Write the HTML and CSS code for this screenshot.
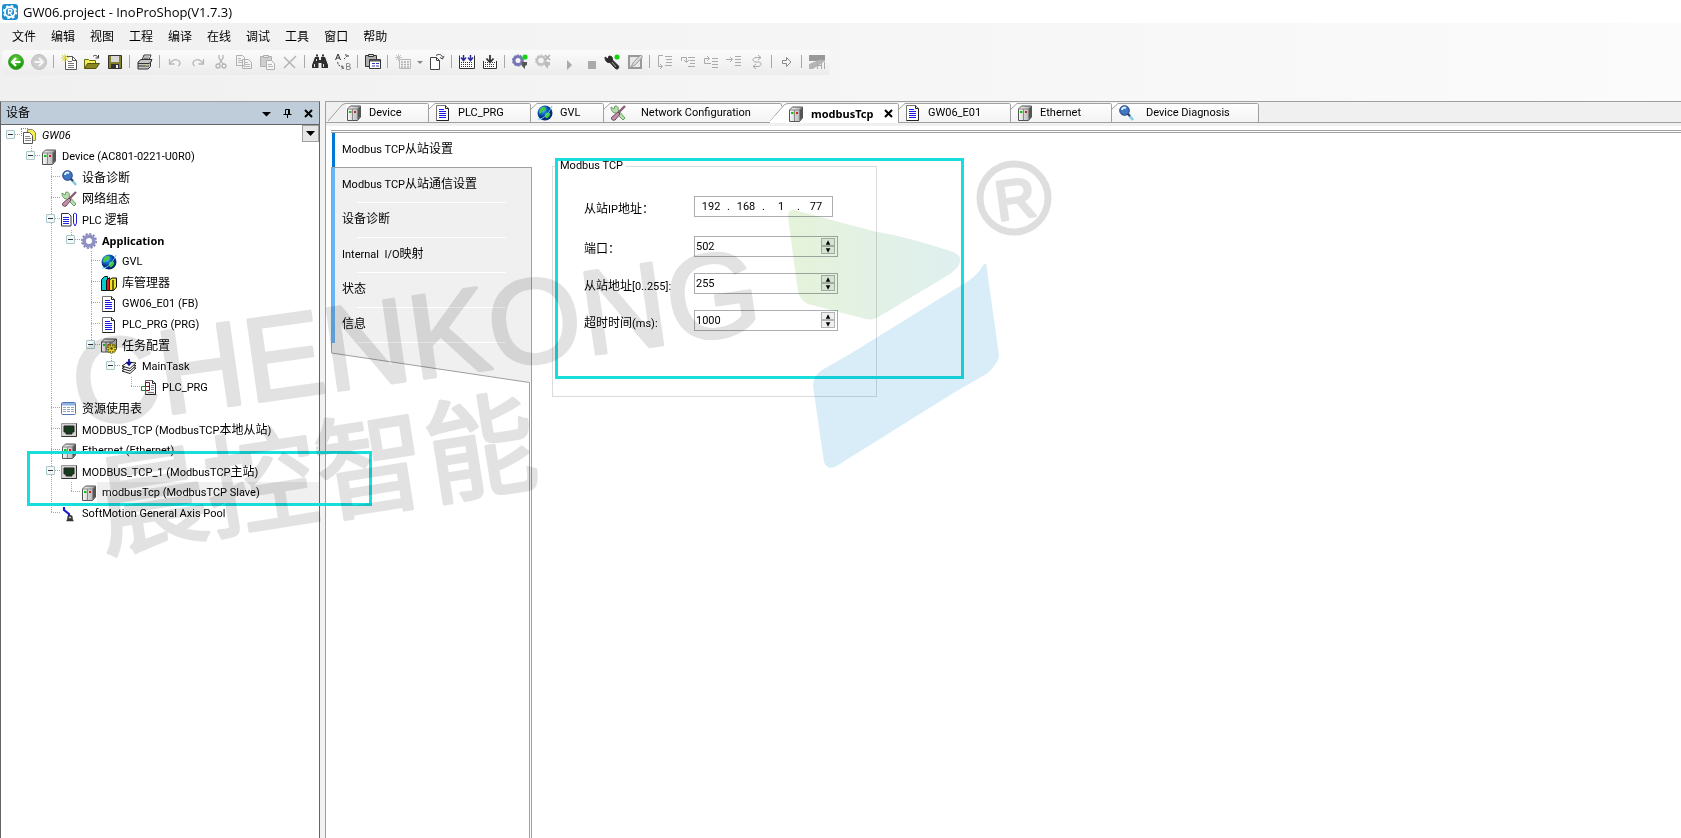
FILE: index.html
```html
<!DOCTYPE html>
<html lang="zh-CN">
<head>
  <meta charset="UTF-8" />
  <meta name="viewport" content="width=device-width, initial-scale=1.0"/>
  <title>GW06.project - InoProShop(V1.7.3)</title>
  <link rel="stylesheet" href="styles.css">
</head>
<body>

  <!-- icon sprite -->
  <svg class="sprite" width="0" height="0" aria-hidden="true">
    <defs>
      <radialGradient id="gGlobe" cx="35%" cy="30%"><stop offset="0" stop-color="#6fd8ff"/><stop offset="0.5" stop-color="#1470d0"/><stop offset="1" stop-color="#052a78"/></radialGradient>
      <radialGradient id="gGreen" cx="50%" cy="35%"><stop offset="0" stop-color="#6fd84a"/><stop offset="1" stop-color="#1f9a10"/></radialGradient>
      <linearGradient id="gBox" x1="0" x2="1"><stop offset="0" stop-color="#f8f8f8"/><stop offset="1" stop-color="#a8a8a8"/></linearGradient>
    </defs>
    <symbol id="i-app" viewBox="0 0 16 16"><rect width="16" height="16" rx="3" fill="#1b8fd0"/><circle cx="8" cy="8" r="5" fill="none" stroke="#fff" stroke-width="1.800"/><circle cx="8" cy="8" r="6.300" fill="none" stroke="#fff" stroke-width="1.600" stroke-dasharray="2.500 2.450"/><path d="M6.500 10.500v-5h2a1.500 1.500 0 0 1 0 3h-1l3 3.500" fill="none" stroke="#fff" stroke-width="1.300"/></symbol>
    <symbol id="i-back" viewBox="0 0 16 16"><circle cx="8" cy="8" r="7.500" fill="url(#gGreen)" stroke="#4aa83a"/><path d="M12.500 8H5M8 4L4 8l4 4" fill="none" stroke="#fff" stroke-width="2.200"/></symbol>
    <symbol id="i-fwd" viewBox="0 0 16 16"><circle cx="8" cy="8" r="7.500" fill="#cdcdcd" stroke="#c0c0c0"/><path d="M3.500 8H11M8 4l4 4-4 4" fill="none" stroke="#f6f6f6" stroke-width="2.200"/></symbol>
    <symbol id="i-new" viewBox="0 0 16 16"><path d="M4.500 2.500h7l4 4v9h-11z" fill="#fff" stroke="#555"/><path d="M11.500 2.500v4h4" fill="none" stroke="#555"/><path d="M7 7.500h4M7 9.500h6M7 11.500h6M7 13.500h6" stroke="#777"/><path d="M4 0v8M0 4h8M1 1l6 6M7 1L1 7" stroke="#d9d23a"/></symbol>
    <symbol id="i-open" viewBox="0 0 16 16"><path d="M0.500 14.500v-9h4l1 1h6v3" fill="#f3ef5a" stroke="#6b6a10"/><path d="M0.500 14.500l3-5h12l-3.500 5z" fill="#8a8620" stroke="#55530c"/><path d="M9 2.500c2-2 4-1 5 1M14.500 1v3h-3" fill="none" stroke="#333"/></symbol>
    <symbol id="i-save" viewBox="0 0 16 16"><path d="M1.500 1.500h13v13h-13z" fill="#85832a" stroke="#333"/><path d="M4 2h8v6H4z" fill="#d8d8d8"/><path d="M4 10h8v4H4z" fill="#333"/><path d="M9 11h2v3H9z" fill="#eee"/></symbol>
    <symbol id="i-print" viewBox="0 0 16 16"><path d="M5 6l2-5h7l-2 5" fill="#fff" stroke="#333"/><path d="M7 3h5M6.500 4.500h5" stroke="#777"/><path d="M1 8l3-2.500h11l-1.500 3v4L11 15H1z" fill="#c4c4c4" stroke="#333"/><path d="M1 9.500h11l2.500-2M1 12h11" fill="none" stroke="#333"/><path d="M8 11h3" stroke="#d8d020"/></symbol>
    <symbol id="i-undo" viewBox="0 0 16 16"><path d="M2.500 5v5h5M3 9.500c2-4 6-5 9-2.500 2 2 1 4-1 5" fill="none" stroke="#b8b8b8" stroke-width="1.300"/></symbol>
    <symbol id="i-redo" viewBox="0 0 16 16"><path d="M13.500 5v5h-5M13 9.500c-2-4-6-5-9-2.500-2 2-1 4 1 5" fill="none" stroke="#b8b8b8" stroke-width="1.300"/></symbol>
    <symbol id="i-cut" viewBox="0 0 16 16"><path d="M6 1v3l4 6M10 1v3L6 10" fill="none" stroke="#b4b4b4" stroke-width="1.300"/><circle cx="5" cy="12" r="2" fill="none" stroke="#b4b4b4" stroke-width="1.300"/><circle cx="11" cy="12" r="2" fill="none" stroke="#b4b4b4" stroke-width="1.300"/></symbol>
    <symbol id="i-copy" viewBox="0 0 16 16"><path d="M0.500 1.500h6l2 2v8h-8zM6.500 5.500h6l3 3v6h-9z" fill="#f4f4f4" stroke="#b0b0b0"/><path d="M2 4.500h3M2 6.500h4M2 8.500h4M8 8.500h4M8 10.500h6M8 12.500h6" stroke="#b8b8b8"/></symbol>
    <symbol id="i-paste" viewBox="0 0 16 16"><path d="M1.500 2.500h11v10h-11z" fill="#cfcfcf" stroke="#b0b0b0"/><path d="M4.500 1.500h5v2h-5z" fill="#eee" stroke="#aaa"/><path d="M7.500 6.500h5l3 3v6h-8z" fill="#f6f6f6" stroke="#b0b0b0"/><path d="M9 10.500h4M9 12.500h5" stroke="#b8b8b8"/></symbol>
    <symbol id="i-del" viewBox="0 0 16 16"><path d="M2 3l11 11M14 2L2 14" stroke="#b4b4b4" stroke-width="1.500"/></symbol>
    <symbol id="i-find" viewBox="0 0 16 16"><path d="M3 3h4v3h2V3h4l3 8v3H9.500V9h-3v5H0v-3z" fill="#2f2f2f"/><path d="M4 1.500h2M10 1.500h2" stroke="#2f2f2f" stroke-width="2"/><path d="M2.500 10v3M11.500 10v3M4.500 5v2" stroke="#ddd"/></symbol>
    <symbol id="i-replace" viewBox="0 0 16 16"><path d="M0.500 6L3 0l2.500 6M1 4h4" fill="none" stroke="#333"/><path d="M11.500 9.500v6h2.500a1.500 1.500 0 0 0 0-3h-2.500 2a1.500 1.500 0 0 0 0-3z" fill="none" stroke="#888"/><path d="M9 5l4-4M10 1h3v3M2.500 8l1 3 5 3M7 11.500l2 2.500-3 1" fill="none" stroke="#444" stroke-dasharray="2 1"/></symbol>
    <symbol id="i-props" viewBox="0 0 16 16"><path d="M0.500 1.500h11v11h-11z" fill="#b0b0b0" stroke="#333"/><path d="M3.500 0.500h5v2h-5z" fill="#ddd" stroke="#333"/><path d="M4.500 5.500h11v9h-11z" fill="#fff" stroke="#333"/><path d="M5 6.500h10" stroke="#555" stroke-width="2"/><path d="M7 9.500h3M11 9.500h3M7 12h3M11 12h3" stroke="#3236b0"/></symbol>
    <symbol id="i-grid" viewBox="0 0 16 16"><path d="M4.500 5.500h11v9h-11z" fill="#f3f3f3" stroke="#b8b8b8"/><path d="M6 8h8M6 10.500h8M6 13h8" stroke="#b0b0b0" stroke-width="1.500" stroke-dasharray="2 1"/><path d="M3.500 0v7M0 3.500h7M1 1l5 5M6 1L1 6" stroke="#c8c8c8"/></symbol>
    <symbol id="i-caret" viewBox="0 0 16 16"><path d="M5 7h6l-3 3z" fill="#888"/></symbol>
    <symbol id="i-docnew" viewBox="0 0 16 16"><path d="M1.500 3.500h6l3 3v9h-9z" fill="#fff" stroke="#444"/><path d="M7.500 3.500v3h3" fill="none" stroke="#444"/><path d="M7 1.500c3-2 6-1 6.500 2M15 2l-1.500 3L11 3.500" fill="none" stroke="#444"/></symbol>
    <symbol id="i-build" viewBox="0 0 16 16"><path d="M0.500 1.500v13h15v-13" fill="#fff" stroke="#333"/><path d="M2 8.500h12M2 10.500h12M2 12.500h12" stroke="#333" stroke-dasharray="1 1"/><path d="M4.500 1v5M11.500 1v5M2 3.500l2.500 3 2.500-3M9 3.500l2.500 3 2.500-3" fill="none" stroke="#2a2c9c" stroke-width="1.500"/></symbol>
    <symbol id="i-load" viewBox="0 0 16 16"><path d="M1.500 7v7.500h13V7" fill="#fff" stroke="#333"/><path d="M3 8.500h3M10 8.500h3M3 10.500h10M3 12.500h10" stroke="#333" stroke-dasharray="1 1"/><path d="M8 1v7M4.500 4.500L8 8.500l3.500-4" fill="none" stroke="#333" stroke-width="1.800"/></symbol>
    <symbol id="i-login" viewBox="0 0 16 16"><circle cx="6" cy="6.500" r="4" fill="none" stroke="#7677b4" stroke-width="3"/><circle cx="6" cy="6.500" r="5.600" fill="none" stroke="#7677b4" stroke-dasharray="2 1.500"/><circle cx="13" cy="3" r="2.600" fill="#14d414"/><path d="M10 8h5v3l-2 1v3l-3-3z" fill="#555"/></symbol>
    <symbol id="i-logout" viewBox="0 0 16 16"><circle cx="6" cy="6.500" r="4" fill="none" stroke="#c2c2c2" stroke-width="2.500"/><circle cx="6" cy="6.500" r="5.500" fill="none" stroke="#c2c2c2" stroke-dasharray="2 1.500"/><path d="M10 1l5 5M15 1l-5 5" stroke="#b0b0b0" stroke-width="1.500"/><path d="M10 8h5v3l-2 1v3l-3-3z" fill="#bbb"/></symbol>
    <symbol id="i-play" viewBox="0 0 16 16"><path d="M9 6l5 5-5 5z" fill="#aaa"/></symbol>
    <symbol id="i-stop" viewBox="0 0 16 16"><path d="M7 7h8v8H7z" fill="#aaa"/></symbol>
    <symbol id="i-wrench" viewBox="0 0 16 16"><path d="M1 3l3 2 1-3c3 0 4 2 3.500 4L14.500 12c1 2-1 4-3 2.500L6 8.500C3 9 1 7 1 3z" fill="#2c2c2c" stroke="#2c2c2c"/><path d="M8 8l4 5" stroke="#aaa"/><circle cx="13" cy="3" r="2.600" fill="#14d414"/></symbol>
    <symbol id="i-edit" viewBox="0 0 16 16"><path d="M2 2h12v12H2z" fill="#e8e8e8" stroke="#999" stroke-width="2"/><path d="M4 13l2-4 7.500-8 2 2L8 11z" fill="#ddd" stroke="#999"/></symbol>
    <symbol id="i-over" viewBox="0 0 16 16"><path d="M6 1.500H1.500v11H5M3 10l2.500 2.500L3 15M8 2.500h7M9 5.500h6M9 8.500h6M8 11.500h7" fill="none" stroke="#aaa"/></symbol>
    <symbol id="i-into" viewBox="0 0 16 16"><path d="M1.500 7V3.500h5V8M4 6l2.500 2.500L9 6M8 3.500h7M10 6.500h5M10 9.500h5M8 12.500h7" fill="none" stroke="#aaa"/></symbol>
    <symbol id="i-out" viewBox="0 0 16 16"><path d="M8 9.500H1.500v-5H6M4 2l2.500 2.500L4 7M9 4.500h6M9 7.500h6M9 10.500h6M9 13.500h6" fill="none" stroke="#aaa"/></symbol>
    <symbol id="i-cursor" viewBox="0 0 16 16"><path d="M0 5.500h6M4 3l2.500 2.500L4 8M9 2.500h6M9 5.500h6M9 8.500h6M9 11.500h6" fill="none" stroke="#aaa"/></symbol>
    <symbol id="i-cycle" viewBox="0 0 16 16"><path d="M9 1l3 2.500L9 6M12 3.500H7C3 4 3 8 7 8h2c4 0 4 3 1 4.500H4M7 10l-3 2.500L7 15" fill="none" stroke="#aaa"/></symbol>
    <symbol id="i-arrow" viewBox="0 0 16 16"><path d="M3.500 6.500h4v-3L12 8l-4.500 4.500v-3h-4z" fill="#f6f6f6" stroke="#888"/></symbol>
    <symbol id="i-ladder" viewBox="0 0 16 16"><path d="M0 1h16v6H0z" fill="#999"/><path d="M0 15v-5l10-4h6v1L4 15z" fill="#b4b4b4"/><path d="M8.500 8v7M8.500 11.500h4M12.500 8v7M15.500 8v7" stroke="#aaa" fill="none"/></symbol>

    <symbol id="i-pages" viewBox="0 0 16 16"><path d="M0 0.500h8M0.500 1v8" stroke="#888" stroke-dasharray="1 1"/><path d="M6.500 1.500h5l3 3v8h-8z" fill="#f5ee4e" stroke="#888"/><path d="M2.500 4.500h6l3 3v8h-9z" fill="#fff" stroke="#555"/><path d="M4 8.500h5M4 10.500h6M4 12.500h6" stroke="#888"/></symbol>
    <symbol id="i-device" viewBox="0 0 16 16"><path d="M1.500 4l3-3h10v11l-3 3.500h-10z" fill="url(#gBox)" stroke="#555"/><path d="M6.500 4v11M1.500 4H11l3-3" fill="none" stroke="#888"/><path d="M11.500 4.500l2.500-3V12l-2.500 3z" fill="#555"/><path d="M3 6h2.500v2H3z" fill="#12c412"/><path d="M8 6h2v2H8z" fill="#d42020"/></symbol>
    <symbol id="i-diag" viewBox="0 0 16 16"><path d="M10 9l5 6" stroke="#7ecbe8" stroke-width="2.600"/><path d="M9 8l3 3" stroke="#345" stroke-width="2"/><circle cx="6.500" cy="5.500" r="4.800" fill="#3f78c4" stroke="#1c3a7e"/><path d="M4 5c0-2 2-3 4-2" stroke="#e4f4ff" stroke-width="2" fill="none"/></symbol>
    <symbol id="i-net" viewBox="0 0 16 16"><path d="M1 2l3 2 1-3c3 0 4 2 3 4l7 8-2 2-7-7C3 8 1 6 1 2z" fill="#b5dfac" stroke="#6a9a64"/><path d="M15 1L8 8" stroke="#8e5d74" stroke-width="2.400"/><path d="M8 7l2 2-5 6c-2 1-4-.5-3.500-2.500z" fill="#c092ac" stroke="#6b3e54"/></symbol>
    <symbol id="i-plc" viewBox="0 0 16 16"><path d="M0.500 1.500h7l2.500 2.500v10H0.500z" fill="#fff" stroke="#333"/><path d="M2 5.500h6M2 7.500h6M2 9.500h6M2 11.500h6" stroke="#2020e0"/><path d="M12.500 2v9l1.500 3 1.500-3V2c-1-1-2-1-3 0z" fill="#fff" stroke="#2020e0"/></symbol>
    <symbol id="i-gear" viewBox="0 0 16 16"><circle cx="8" cy="8" r="4.800" fill="none" stroke="#8f90c4" stroke-width="3.600"/><circle cx="8" cy="8" r="7.200" fill="none" stroke="#7d7fb4" stroke-width="1.600" stroke-dasharray="2.200 1.570"/></symbol>
    <symbol id="i-globe" viewBox="0 0 16 16"><circle cx="8" cy="8" r="7.500" fill="url(#gGlobe)"/><path d="M6 2c3 0 4 2 2 3s-4 2-5 4C1 7 3 3 6 2zM9 8c3-1 5 0 4 2s-3 4-4 3-2-4 0-5z" fill="#49c83c"/><path d="M1 14c3 1 10-3 14-13" fill="none" stroke="#5fd4ff"/></symbol>
    <symbol id="i-lib" viewBox="0 0 16 16"><path d="M0.500 4.500l3-3h3v3l-1 11h-5z" fill="#0bc6cc" stroke="#111"/><path d="M5.500 5.500l3-3v13h-3z" fill="#e01818" stroke="#111"/><path d="M8.500 5l2.500-2 4.500 0v9l-3 3.500h-4z" fill="#f0e22a" stroke="#111"/><path d="M12 5v10" stroke="#6b6408" stroke-width="2"/></symbol>
    <symbol id="i-doc" viewBox="0 0 16 16"><path d="M1.500 0.500h9l3 3v12h-12z" fill="#fff" stroke="#777"/><path d="M10.500 0.500v3h3v12h-12" fill="none" stroke="#222"/><path d="M4 4.500h5M4 6.500h7M4 8.500h7M4 10.500h7M4 12.500h7" stroke="#1818ee"/></symbol>
    <symbol id="i-task" viewBox="0 0 16 16"><path d="M0.500 4l3-3h12v10l-3 3h-12z" fill="url(#gBox)" stroke="#444"/><path d="M5 4v10M9 4v8M0.500 4H12l3-3" fill="none" stroke="#555"/><path d="M2 6h2v2H2z" fill="#12c412"/><path d="M6.500 6H8v2H6.500z" fill="#d42020"/><path d="M10.500 5.500v10M5.500 10.500h10M7 7l7 7M14 7l-7 7" stroke="#5e5200" stroke-width="2.600"/><path d="M10.500 6v9M6 10.500h9M7.500 7.500l6 6M13.500 7.500l-6 6" stroke="#ecd81e" stroke-width="1.500"/><circle cx="10.500" cy="10.500" r="1.200" fill="#444"/></symbol>
    <symbol id="i-stack" viewBox="0 0 16 16"><path d="M1 12l6-4 8 1-6 5.500z" fill="#fff" stroke="#222"/><path d="M1 9.500l6-4 8 1-6 5.500z" fill="#fff" stroke="#222"/><path d="M1 7l6-4 8 1-6 5.500z" fill="#fff" stroke="#222"/><path d="M8 0v5M5.500 3L8 6l2.500-3" fill="none" stroke="#10109a" stroke-width="1.700"/></symbol>
    <symbol id="i-call" viewBox="0 0 16 16"><path d="M4.500 0.500h7l3 3v11h-10z" fill="#fff" stroke="#666"/><path d="M11.500 0.500v3h3v11h-10" fill="none" stroke="#222"/><path d="M10 5.500h3M10 7.500h3M10 9.500h3M7 12.500h6" stroke="#888"/><path d="M4.500 2.500h4v8h-4z" fill="#fff" stroke="#8a1020"/><path d="M0.500 6.500h4v4h-4z" fill="#fff" stroke="#128a20"/><path d="M4.500 6.500h4" stroke="#8a1020"/></symbol>
    <symbol id="i-table" viewBox="0 0 16 16"><rect x=".5" y="1.500" width="14" height="12" rx="1" fill="#fff" stroke="#5478b4"/><path d="M1 2h13v2.500H1z" fill="#8fb2e4"/><path d="M2 6.500h11M2 8.500h11M2 10.500h11" stroke="#9aa6b4" stroke-dasharray="3 1"/></symbol>
    <symbol id="i-port" viewBox="0 0 16 16"><path d="M0.500 1.500h15v13h-15z" fill="#d4d4d4" stroke="#999"/><path d="M15.500 1.500v13H0.500" fill="none" stroke="#333"/><path d="M3 4h10v6h-2v2H5v-2H3z" fill="#143c1c" stroke="#222"/></symbol>
    <symbol id="i-axis" viewBox="0 0 16 16"><path d="M3 1v3l5 4v2" fill="none" stroke="#1a1ad8" stroke-width="2.200"/><path d="M5.500 14.500h7M7 12c0-3 4-3 4 0v1H7z" stroke="#333" stroke-width="1.500" fill="#ccc"/></symbol>
  </svg>

  <header class="titlebar">
    <svg class="icon"><use href="#i-app"/></svg>
    <h1>GW06.project - InoProShop(V1.7.3)</h1>
  </header>

  <nav class="menubar">
    <button>文件</button><button>编辑</button><button>视图</button><button>工程</button><button>编译</button><button>在线</button><button>调试</button><button>工具</button><button>窗口</button><button>帮助</button>
  </nav>

  <div class="toolbar" role="toolbar">
    <button aria-label="后退"><svg class="icon"><use href="#i-back"/></svg></button>
    <button aria-label="前进"><svg class="icon"><use href="#i-fwd"/></svg></button>
    <i class="sep"></i>
    <button aria-label="新建"><svg class="icon"><use href="#i-new"/></svg></button>
    <button aria-label="打开"><svg class="icon"><use href="#i-open"/></svg></button>
    <button aria-label="保存"><svg class="icon"><use href="#i-save"/></svg></button>
    <i class="sep"></i>
    <button aria-label="打印"><svg class="icon"><use href="#i-print"/></svg></button>
    <i class="sep"></i>
    <button aria-label="撤销"><svg class="icon"><use href="#i-undo"/></svg></button>
    <button aria-label="重做"><svg class="icon"><use href="#i-redo"/></svg></button>
    <button aria-label="剪切"><svg class="icon"><use href="#i-cut"/></svg></button>
    <button aria-label="复制"><svg class="icon"><use href="#i-copy"/></svg></button>
    <button aria-label="粘贴"><svg class="icon"><use href="#i-paste"/></svg></button>
    <button aria-label="删除"><svg class="icon"><use href="#i-del"/></svg></button>
    <i class="sep"></i>
    <button aria-label="查找"><svg class="icon"><use href="#i-find"/></svg></button>
    <button aria-label="替换"><svg class="icon"><use href="#i-replace"/></svg></button>
    <i class="sep"></i>
    <button aria-label="属性"><svg class="icon"><use href="#i-props"/></svg></button>
    <i class="sep"></i>
    <button aria-label="添加对象"><svg class="icon"><use href="#i-grid"/></svg></button>
    <button class="narrow" aria-label="更多"><svg class="icon"><use href="#i-caret"/></svg></button>
    <button aria-label="编辑对象"><svg class="icon"><use href="#i-docnew"/></svg></button>
    <i class="sep"></i>
    <button aria-label="编译"><svg class="icon"><use href="#i-build"/></svg></button>
    <button aria-label="下载"><svg class="icon"><use href="#i-load"/></svg></button>
    <i class="sep"></i>
    <button aria-label="登录"><svg class="icon"><use href="#i-login"/></svg></button>
    <button aria-label="退出"><svg class="icon"><use href="#i-logout"/></svg></button>
    <button aria-label="启动"><svg class="icon"><use href="#i-play"/></svg></button>
    <button aria-label="停止"><svg class="icon"><use href="#i-stop"/></svg></button>
    <button aria-label="连接"><svg class="icon"><use href="#i-wrench"/></svg></button>
    <button aria-label="在线修改"><svg class="icon"><use href="#i-edit"/></svg></button>
    <i class="sep"></i>
    <button aria-label="跳过"><svg class="icon"><use href="#i-over"/></svg></button>
    <button aria-label="跳入"><svg class="icon"><use href="#i-into"/></svg></button>
    <button aria-label="跳出"><svg class="icon"><use href="#i-out"/></svg></button>
    <button aria-label="运行到光标"><svg class="icon"><use href="#i-cursor"/></svg></button>
    <button aria-label="单循环"><svg class="icon"><use href="#i-cycle"/></svg></button>
    <i class="sep"></i>
    <button aria-label="下一条"><svg class="icon"><use href="#i-arrow"/></svg></button>
    <i class="sep"></i>
    <button aria-label="流控制"><svg class="icon"><use href="#i-ladder"/></svg></button>
  </div>

  <div class="workspace">
    <aside class="devices">
      <div class="panel-head">
        <h2>设备</h2>
        <button aria-label="菜单"><svg width="9" height="9" viewBox="0 0 9 9"><path d="M0 3h9L4.500 7.500z"/></svg></button>
        <button aria-label="固定"><svg width="9" height="9" viewBox="0 0 9 9"><path d="M2.500 5V.5h4V5M5.500 0v5M0.500 5.500h8M4.500 6v3" fill="none" stroke="#000"/></svg></button>
        <button aria-label="关闭"><svg width="9" height="9" viewBox="0 0 9 9"><path d="M1 1l7 7M8 1L1 8" stroke="#000" stroke-width="2"/></svg></button>
      </div>
      <div class="tree-wrap">
        <ul class="tree">
          <li><div class="row"><button class="toggle" aria-label="折叠"></button><svg class="icon"><use href="#i-pages"/></svg><em>GW06</em></div>
            <ul>
              <li><div class="row"><button class="toggle" aria-label="折叠"></button><svg class="icon"><use href="#i-device"/></svg><span>Device (AC801-0221-U0R0)</span></div>
                <ul>
                  <li><div class="row"><svg class="icon"><use href="#i-diag"/></svg><span><b>设备诊断</b></span></div></li>
                  <li><div class="row"><svg class="icon"><use href="#i-net"/></svg><span><b>网络组态</b></span></div></li>
                  <li><div class="row"><button class="toggle" aria-label="折叠"></button><svg class="icon"><use href="#i-plc"/></svg><span>PLC <b>逻辑</b></span></div>
                    <ul>
                      <li><div class="row"><button class="toggle" aria-label="折叠"></button><svg class="icon"><use href="#i-gear"/></svg><strong>Application</strong></div>
                        <ul>
                          <li><div class="row"><svg class="icon"><use href="#i-globe"/></svg><span>GVL</span></div></li>
                          <li><div class="row"><svg class="icon"><use href="#i-lib"/></svg><span><b>库管理器</b></span></div></li>
                          <li><div class="row"><svg class="icon"><use href="#i-doc"/></svg><span>GW06_E01 (FB)</span></div></li>
                          <li><div class="row"><svg class="icon"><use href="#i-doc"/></svg><span>PLC_PRG (PRG)</span></div></li>
                          <li><div class="row"><button class="toggle" aria-label="折叠"></button><svg class="icon"><use href="#i-task"/></svg><span><b>任务配置</b></span></div>
                            <ul>
                              <li><div class="row"><button class="toggle" aria-label="折叠"></button><svg class="icon"><use href="#i-stack"/></svg><span>MainTask</span></div>
                                <ul>
                                  <li><div class="row"><svg class="icon"><use href="#i-call"/></svg><span>PLC_PRG</span></div></li>
                                </ul>
                              </li>
                            </ul>
                          </li>
                        </ul>
                      </li>
                    </ul>
                  </li>
                  <li><div class="row"><svg class="icon"><use href="#i-table"/></svg><span><b>资源使用表</b></span></div></li>
                  <li><div class="row"><svg class="icon"><use href="#i-port"/></svg><span>MODBUS_TCP (ModbusTCP<b>本地从站</b>)</span></div></li>
                  <li><div class="row"><svg class="icon"><use href="#i-device"/></svg><span>Ethernet (Ethernet)</span></div></li>
                  <li><div class="row"><button class="toggle" aria-label="折叠"></button><svg class="icon"><use href="#i-port"/></svg><span>MODBUS_TCP_1 (ModbusTCP<b>主站</b>)</span></div>
                    <ul>
                      <li><div class="row selected"><svg class="icon"><use href="#i-device"/></svg><span>modbusTcp (ModbusTCP Slave)</span></div></li>
                    </ul>
                  </li>
                  <li><div class="row"><svg class="icon"><use href="#i-axis"/></svg><span>SoftMotion General Axis Pool</span></div></li>
                </ul>
              </li>
            </ul>
          </li>
        </ul>
        <button class="tree-drop" aria-label="展开列表"><svg width="9" height="5" viewBox="0 0 9 5"><path d="M0 0h9L4.500 5z"/></svg></button>
      </div>
    </aside>

    <main class="editor">
      <div class="tabs" role="tablist">
        <button class="tab t-device" role="tab"><svg class="edge wide" viewBox="0 0 18 18"><path d="M0 18L14 2Q16 .5 18 .5"/></svg><svg class="icon"><use href="#i-device"/></svg><span>Device</span></button>
        <button class="tab t-plc" role="tab"><svg class="edge" viewBox="0 0 6 18"><path d="M0 6L6 .5"/></svg><svg class="icon"><use href="#i-doc"/></svg><span>PLC_PRG</span></button>
        <button class="tab t-gvl" role="tab"><svg class="edge" viewBox="0 0 6 18"><path d="M0 6L6 .5"/></svg><svg class="icon"><use href="#i-globe"/></svg><span>GVL</span></button>
        <button class="tab t-net" role="tab"><svg class="edge" viewBox="0 0 6 18"><path d="M0 6L6 .5"/></svg><svg class="icon"><use href="#i-net"/></svg><span>Network Configuration</span></button>
        <button class="tab t-modbus active" role="tab" aria-selected="true"><svg class="edge wide" viewBox="0 0 18 18"><path d="M0 18L14 2Q16 .5 18 .5"/></svg><svg class="icon"><use href="#i-device"/></svg><span>modbusTcp</span><svg class="close" width="9" height="9" viewBox="0 0 9 9"><path d="M1 1l7 7M8 1L1 8" stroke="#000" stroke-width="2"/></svg></button>
        <button class="tab t-e01" role="tab"><svg class="edge" viewBox="0 0 6 18"><path d="M0 6L6 .5"/></svg><svg class="icon"><use href="#i-doc"/></svg><span>GW06_E01</span></button>
        <button class="tab t-eth" role="tab"><svg class="edge" viewBox="0 0 6 18"><path d="M0 6L6 .5"/></svg><svg class="icon"><use href="#i-device"/></svg><span>Ethernet</span></button>
        <button class="tab t-dd" role="tab"><svg class="edge" viewBox="0 0 6 18"><path d="M0 6L6 .5"/></svg><svg class="icon"><use href="#i-diag"/></svg><span>Device Diagnosis</span></button>
      </div>

      <div class="page">
        <nav class="side">
          <button class="current">Modbus TCP<b>从站设置</b></button>
          <div class="side-list">
            <button>Modbus TCP<b>从站通信设置</b></button>
            <button><b>设备诊断</b></button>
            <button>Internal&nbsp; I/O<b>映射</b></button>
            <button><b>状态</b></button>
            <button><b>信息</b></button>
          </div>
          <svg class="slant" viewBox="0 0 201 40"><path d="M0.500 0v10L198.500 40H200.500V0z" fill="#f0f0f0"/><path d="M0.500 0v10L198.500 39.500M200.500 0v40" fill="none" stroke="#a0a0a0"/></svg>
          <div class="rail"></div>
        </nav>

        <form class="settings">
          <fieldset>
            <legend>Modbus TCP</legend>
            <label for="ip1"><b>从站</b>IP<b>地址：</b></label>
            <div class="ip">
              <input id="ip1" value="192" aria-label="从站IP地址 1">.<input value="168" aria-label="从站IP地址 2">.<input value="1" aria-label="从站IP地址 3">.<input value="77" aria-label="从站IP地址 4">
            </div>
            <label for="port"><b>端口：</b></label>
            <div class="spin"><input id="port" value="502"><div class="arrows"><button type="button" aria-label="增加">▲</button><button type="button" aria-label="减少">▼</button></div></div>
            <label for="addr"><b>从站地址</b>[0..255]:</label>
            <div class="spin"><input id="addr" value="255"><div class="arrows"><button type="button" aria-label="增加">▲</button><button type="button" aria-label="减少">▼</button></div></div>
            <label for="timeout"><b>超时时间</b>(ms):</label>
            <div class="spin"><input id="timeout" value="1000"><div class="arrows"><button type="button" aria-label="增加">▲</button><button type="button" aria-label="减少">▼</button></div></div>
          </fieldset>
        </form>
      </div>
    </main>
  </div>

  <!-- highlights and watermark over the whole window -->
  <div class="mark mark-tree"></div>
  <div class="mark mark-form"></div>
  <svg class="watermark" width="1100" height="600" viewBox="0 0 1100 600" aria-hidden="true">
    <defs><linearGradient id="gLeaf"><stop offset="0" stop-color="#e5f3da"/><stop offset="1" stop-color="#dfeff0"/></linearGradient></defs>
    <text class="wm-latin" transform="translate(78 427) rotate(-8)">CHENKONG</text>
    <text class="wm-cjk" transform="translate(103 549) rotate(-9)">晨控智能</text>
    <path d="M794 210L877 232Q905 236 953 252Q965 256 957 268L950 274L880 316Q872 322 862 318L808 304Q800 300 798 292L788 217Q788 209 794 210z" fill="url(#gLeaf)"/>
    <path d="M984 264Q987 262 987 270L999 355Q999 362 988 373L955 392L835 467Q827 470 824 462L813 386Q813 376 822 370L850 354L960 286Q976 278 984 264z" fill="#d9edf8"/>
    <circle cx="1014" cy="198" r="34" fill="none" stroke="#dedede" stroke-width="7"/>
    <text class="wm-reg" transform="translate(998 221) rotate(-8)">R</text>
  </svg>

</body>
</html>
```
FILE: styles.css
```css
* {
  box-sizing: border-box;
}
body {
  margin: 0;
  min-height: 100vh;
  display: flex;
  flex-direction: column;
  position: relative;
  font: 11px/14px Roboto, "Noto Sans CJK SC", sans-serif;
  color: #000;
  background: linear-gradient(90deg, #f0f0f0, #fbfbfb);
}
button, input {
  font: inherit;
  color: inherit;
  padding: 0;
  border: none;
  background: none;
}
b {
  font-size: 12px;
  font-weight: 400;
  font-family: "Noto Sans CJK SC", sans-serif;
}
h1, h2 {
  margin: 0;
  font-size: 12px;
  font-weight: 400;
}
ul {
  list-style: none;
  margin: 0;
  padding: 0;
}
.sprite {
  position: absolute;
}
.icon {
  width: 16px;
  height: 16px;
  flex: none;
}

/* title, menu, toolbar */
.titlebar {
  display: flex;
  align-items: center;
  gap: 5px;
  height: 23px;
  padding-left: 2px;
  background: #fff;
}
.titlebar h1 {
  font: 13px/20px "Open Sans", sans-serif;
}
.menubar {
  display: flex;
  gap: 15px;
  height: 27px;
  padding: 1px 0 0 12px;
}
.menubar button {
  font-size: 12px;
}
.toolbar {
  display: flex;
  align-items: center;
  align-self: flex-start;
  height: 25px;
  margin: 0 0 26px 2px;
  padding: 0 2px 2px;
  border-radius: 4px;
  background: linear-gradient(#fbfbfb, #ececec);
}
.toolbar button {
  display: flex;
  justify-content: center;
  width: 23px;
}
.toolbar .narrow {
  width: 11px;
}
.sep {
  width: 1px;
  height: 13px;
  margin: 0 3px;
  background: #a8a8a8;
}

.workspace {
  flex: 1;
  display: flex;
  gap: 5px;
}

/* device tree */
.devices {
  display: flex;
  flex-direction: column;
  width: 320px;
  border: 1px solid #646464;
  border-top-color: #a0a0a0;
  border-bottom: none;
  background: #fff;
}
.panel-head {
  display: flex;
  align-items: center;
  gap: 12px;
  height: 23px;
  padding: 0 6px 0 5px;
  border-bottom: 1px solid #646464;
  background: #bfcddb;
}
.panel-head h2 {
  flex: 1;
}
.panel-head button {
  display: flex;
}
.tree-wrap {
  display: flex;
  align-items: flex-start;
}
.tree {
  flex: 1;
}
.tree-drop {
  width: 17px;
  height: 17px;
  margin-left: -17px;
  border: 1px solid #a0a0a0;
  background: #e6e6e6;
  display: flex;
  align-items: center;
  justify-content: center;
}
.tree ul {
  margin-left: 20px;
}
.tree ul > li:not(:last-child) {
  background: repeating-linear-gradient(#a8a8a8 0 1px, transparent 1px 2px) 10px 0 / 1px 100% no-repeat;
}
.row {
  display: flex;
  align-items: center;
  height: 21px;
  padding-left: 20px;
  white-space: nowrap;
  background: repeating-linear-gradient(90deg, #a8a8a8 0 1px, transparent 1px 2px) 10px 9px / 10px 1px no-repeat;
}
.tree ul > li:last-child > .row {
  background:
    repeating-linear-gradient(90deg, #a8a8a8 0 1px, transparent 1px 2px) 10px 9px / 10px 1px no-repeat,
    repeating-linear-gradient(#a8a8a8 0 1px, transparent 1px 2px) 10px 0 / 1px 10px no-repeat;
}
.toggle {
  width: 9px;
  height: 9px;
  margin: 0 6px 3px -15px;
  border: 1px solid #a9c6c9;
  border-radius: 1px;
  background: linear-gradient(#333, #333) center / 5px 1px no-repeat #f4f8f8;
}
.row span, .row em, .row strong {
  padding-left: 5px;
  line-height: 21px;
}
.row strong {
  font-family: "Noto Sans", sans-serif;
}
.selected span {
  flex: 1;
  background: #f0f0f0;
}

/* editor */
.editor {
  flex: 1;
  min-width: 0;
  display: flex;
  flex-direction: column;
  border-left: 1px solid #a0a0a0;
  border-top: 1px solid #a0a0a0;
  background: #fff;
}
.tabs {
  display: flex;
  align-items: flex-end;
  height: 24px;
  padding: 0 0 3px 2px;
  background: linear-gradient(#a0a0a0, #a0a0a0) 0 20px / 100% 1px no-repeat #f0f0f0;
}
.tab {
  display: flex;
  align-items: center;
  height: 19px;
  margin-bottom: 1px;
  padding-top: 1px;
  white-space: nowrap;
  border-right: 1px solid #a0a0a0;
  border-radius: 0 3px 0 0;
  background: linear-gradient(#a0a0a0, #a0a0a0) 6px 0 / 100% 1px no-repeat, linear-gradient(#fff, #f3f3f3);
}
.t-device {
  background: linear-gradient(#a0a0a0, #a0a0a0) 18px 0 / 100% 1px no-repeat, linear-gradient(#fff, #f3f3f3) 18px 0 no-repeat;
}
.tab.active {
  height: 20px;
  margin: 0 0 0 -12px;
  font: 700 11px/14px "Noto Sans", sans-serif;
  background: linear-gradient(#a0a0a0, #a0a0a0) 18px 0 / 100% 1px no-repeat, #fff;
  clip-path: polygon(0 100%, 0 90%, 14px 0, 100% 0, 100% 100%);
}
.tab span {
  flex: 1;
  text-align: left;
}
.edge {
  width: 6px;
  height: 18px;
  margin-top: -1px;
  align-self: flex-start;
  flex: none;
}
.edge.wide {
  width: 18px;
}
.edge path {
  fill: none;
  stroke: #a0a0a0;
}
.t-device { width: 101px; }
.t-plc { width: 102px; }
.t-gvl { width: 73px; }
.t-net { width: 178px; }
.t-modbus { width: 129px; }
.t-e01 { width: 112px; }
.t-eth { width: 101px; }
.t-dd { width: 147px; }
.t-device span { padding-left: 7px; }
.t-plc span { padding-left: 7px; }
.t-gvl span { padding-left: 7px; }
.t-net span { padding-left: 15px; }
.t-modbus span { padding-left: 7px; }
.t-e01 span { padding-left: 7px; }
.t-eth span { padding-left: 7px; }
.t-dd span { padding-left: 12px; }
.close {
  margin-right: 5px;
}
.page {
  flex: 1;
  display: flex;
  margin: 4px 0 0 5px;
  border-top: 3px double #a0a0a0;
}
.side {
  display: flex;
  flex-direction: column;
  width: 201px;
}
.side button {
  height: 35px;
  padding: 0 0 3px 7px;
  text-align: left;
  border-left: 3px solid #69b4f5;
}
.side .current {
  height: 34px;
  margin-left: 1px;
  border-left-color: #0078d7;
  background: #fff;
}
.side-list {
  display: flex;
  flex-direction: column;
  border: 1px solid #a0a0a0;
  border-bottom: none;
  background: #f0f0f0;
}
.side-list button {
  background: linear-gradient(#fff, #fff) 22px 100% / 149px 1px no-repeat;
}
.slant {
  width: 201px;
  height: 40px;
}
.rail {
  flex: 1;
  border-right: 3px double #a0a0a0;
}

/* slave settings */
.settings {
  flex: 1;
  padding: 26px 0 0 20px;
}
fieldset {
  display: grid;
  grid-template-columns: 110px 1fr;
  row-gap: 16px;
  align-content: start;
  width: 325px;
  height: 238px;
  margin: 0;
  padding: 23px 0 0 31px;
  border: 1px solid #dcdcdc;
}
legend {
  margin-left: -26px;
  padding: 0 3px 0 2px;
}
label {
  padding-top: 5px;
  white-space: nowrap;
}
.ip {
  display: flex;
  align-items: center;
  width: 139px;
  height: 21px;
  margin-bottom: 3px;
  border: 1px solid #abadb3;
  background: #fff;
}
.ip input {
  flex: 1;
  min-width: 0;
  text-align: center;
}
.spin {
  display: flex;
  width: 144px;
  height: 21px;
  padding: 1px;
  border: 1px solid #abadb3;
  background: #fff;
}
.spin input {
  flex: 1;
  min-width: 0;
  height: 16px;
}
.arrows {
  width: 15px;
}
.arrows button {
  display: flex;
  align-items: center;
  justify-content: center;
  width: 14px;
  height: 8px;
  border: 1px solid #b4b4b4;
  background: #f0f0f0;
  font: 6px/6px "DejaVu Sans", sans-serif;
}

/* overlays */
.mark {
  position: absolute;
  border: 3px solid #17dddb;
  pointer-events: none;
}
.mark-tree {
  left: 27px;
  top: 451px;
  width: 345px;
  height: 55px;
}
.mark-form {
  left: 555px;
  top: 158px;
  width: 409px;
  height: 221px;
}
.watermark {
  position: absolute;
  left: 0;
  top: 0;
  pointer-events: none;
  mix-blend-mode: multiply;
}
.watermark text {
  fill: #e2e2e2;
  stroke: #e2e2e2;
  stroke-width: 3px;
  stroke-linejoin: round;
}
.wm-latin {
  font: 120px "Liberation Sans", sans-serif;
}
.wm-cjk {
  font: 111px "Noto Sans CJK SC", sans-serif;
}
.wm-reg {
  font: 56px "Liberation Sans", sans-serif;
}
```
